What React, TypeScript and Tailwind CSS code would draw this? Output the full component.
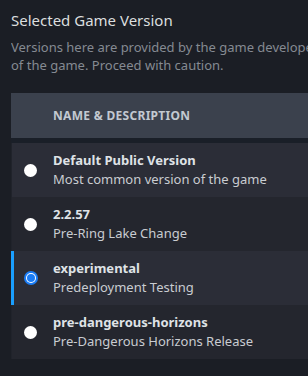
import React from 'react';

type Version = {
  name: string;
  description: string;
};

const versions: Version[] = [
  { name: 'Default Public Version', description: 'Most common version of the game' },
  { name: '2.2.57', description: 'Pre-Ring Lake Change' },
  { name: 'experimental', description: 'Predeployment Testing' },
  { name: 'pre-dangerous-horizons', description: 'Pre-Dangerous Horizons Release' },
];

function Radio({ checked }: { checked: boolean }) {
  if (checked) {
    return (
      <div className="w-[14px] h-[14px] rounded-full bg-[#1a7cf5] flex items-center justify-center">
        <div className="w-[10px] h-[10px] rounded-full bg-white flex items-center justify-center">
          <div className="w-[8px] h-[8px] rounded-full bg-[#1a7cf5]" />
        </div>
      </div>
    );
  }
  return <div className="w-[13px] h-[13px] rounded-full bg-white" />;
}

export default function App() {
  const selected = 2;

  return (
    <div className="w-[308px] h-[376px] overflow-hidden bg-[#1b1e25] font-['Noto_Sans',sans-serif] pt-[9px] pl-[11px]">
      <h2 className="text-[15px] leading-[22px] text-[#dcdedf]">Selected Game Version</h2>
      <p className="mt-[7px] w-[297px] overflow-hidden text-[13px] leading-[18px] text-[#858a92] whitespace-nowrap">
        Versions here are provided by the game developer for specific purposes
        <br />
        of the game. Proceed with caution.
      </p>

      <div className="mt-[19px] w-[340px]">
        <div className="h-[50px] bg-[#3b414d] flex items-center pl-[42px] border-b-[5px] border-[#1a1f28]">
          <span className="text-[12px] font-bold tracking-[0.3px] text-[#c3c9d1]">NAME &amp; DESCRIPTION</span>
        </div>
        {versions.map((v, i) => (
          <div
            key={v.name}
            className={`h-[54px] flex items-center ${i % 2 === 0 ? 'bg-[#2b2d37]' : 'bg-[#24262e]'} ${
              i === selected ? 'border-l-[3px] border-[#1a9fff] pl-[10px]' : 'border-l border-[#20232b] pl-[12px]'
            }`}
          >
            <Radio checked={i === selected} />
            <div className={`${i === selected ? 'ml-[15px]' : 'ml-[16px]'} flex flex-col`}>
              <span className="text-[13px] leading-[19px] font-bold text-[#dfe2e6]">{v.name}</span>
              <span className="text-[13px] leading-[19px] text-[#c9ccd1]">{v.description}</span>
            </div>
          </div>
        ))}
      </div>
    </div>
  );
}
